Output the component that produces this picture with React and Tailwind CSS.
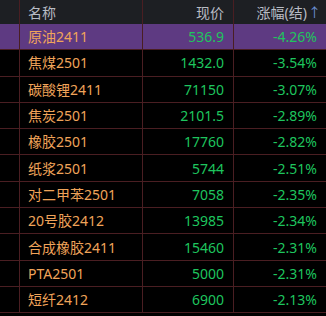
const ROWS = [
  { name: "原油2411", price: "536.9", pct: "-4.26%" },
  { name: "焦煤2501", price: "1432.0", pct: "-3.54%" },
  { name: "碳酸锂2411", price: "71150", pct: "-3.07%" },
  { name: "焦炭2501", price: "2101.5", pct: "-2.89%" },
  { name: "橡胶2501", price: "17760", pct: "-2.82%" },
  { name: "纸浆2501", price: "5744", pct: "-2.51%" },
  { name: "对二甲苯2501", price: "7058", pct: "-2.35%" },
  { name: "20号胶2412", price: "13985", pct: "-2.34%" },
  { name: "合成橡胶2411", price: "15460", pct: "-2.31%" },
  { name: "PTA2501", price: "5000", pct: "-2.31%" },
  { name: "短纤2412", price: "6900", pct: "-2.13%" },
];

const font = { fontFamily: '"Noto Sans", "Noto Sans CJK SC", sans-serif' };

export default function App() {
  return (
    <div className="w-[326px] h-[316px] overflow-hidden bg-black text-[14px]" style={font}>
      <div className="grid grid-cols-[20px_123px_91px_92px] h-[24px] bg-[#1d1f23] text-[#b8bcc4] items-stretch">
        <div className="border-r border-[#4a1e22]" />
        <div className="flex items-center pl-[8px] border-r border-[#4a1e22]">名称</div>
        <div className="flex items-center justify-end pr-[9px] border-r border-[#4a1e22]">现价</div>
        <div className="flex items-center justify-end pr-[5px]">
          涨幅(结)<span className="text-[#6b8fd6] text-[13px] leading-none ml-[1px]">↑</span>
        </div>
      </div>
      {ROWS.map((r, i) => (
        <div
          key={i}
          className={
            "grid grid-cols-[20px_123px_91px_92px] h-[26.3px] border-b border-[#4a1e22] " +
            (i === 0 ? "bg-[#5e3a82]" : "bg-black")
          }
        >
          <div className="border-r border-[#4a1e22]" />
          <div className="flex items-center pl-[8px] text-[#f0a45a] border-r border-[#4a1e22] whitespace-nowrap">{r.name}</div>
          <div className="flex items-center justify-end pr-[9px] text-[#1ec55e] border-r border-[#4a1e22]">{r.price}</div>
          <div className="flex items-center justify-end pr-[9px] text-[#1ec55e]">{r.pct}</div>
        </div>
      ))}
    </div>
  );
}
